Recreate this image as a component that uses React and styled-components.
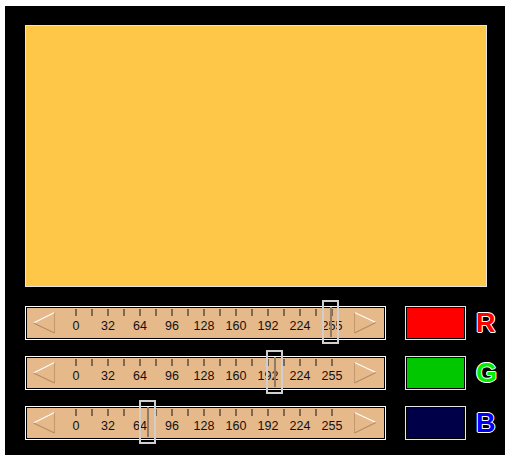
import React from "react";
import styled, { createGlobalStyle } from "styled-components";

const GlobalStyle = createGlobalStyle`
  html, body {
    margin: 0;
    padding: 0;
    background: #ffffff;
    font-family: "Liberation Sans", Arial, sans-serif;
  }
`;

const Panel = styled.div`
  margin: 6px 0 0 5px;
  width: 500px;
  height: 449px;
  box-sizing: border-box;
  background: #000;
  padding: 19px 0 0 20px;
  display: flex;
  flex-direction: column;
`;

const Preview = styled.div`
  width: 462px;
  height: 262px;
  box-sizing: border-box;
  border: 1px solid #e4e4e4;
  background: ${(p) => p.$color};
`;

const Rows = styled.div`
  margin-top: 19px;
  display: flex;
  flex-direction: column;
  gap: 16px;
`;

const Row = styled.div`
  display: flex;
  align-items: center;
  height: 34px;

  & > * {
    flex: none;
  }
`;

const SliderFrame = styled.div`
  position: relative;
  width: 361px;
  height: 34px;
  box-sizing: border-box;
  border: 1px solid #ffffff;
  padding: 1px;
  background: #000;
`;

const Track = styled.div`
  height: 100%;
  background: #e6b98b;
  display: flex;
  align-items: center;
`;

const ArrowIcon = styled.svg`
  flex: none;
  width: 23px;
  height: 22px;
  margin-left: ${(p) => p.$ml}px;
`;

const Scale = styled.div`
  align-self: stretch;
  flex: none;
  width: 288px;
  margin-left: 4px;
  display: flex;
  flex-direction: column;
`;

const Ticks = styled.div`
  height: 7px;
  margin-top: 1px;
  padding-left: 15px;
  display: flex;
  gap: 14px;
`;

const Tick = styled.span`
  flex: none;
  width: 2px;
  height: 100%;
  background: #7b6753;
`;

const Labels = styled.div`
  margin-top: 3px;
  display: flex;
`;

const Label = styled.span`
  flex: none;
  width: 32px;
  text-align: center;
  font-size: 12.5px;
  line-height: 14px;
  color: #111;
`;

const Thumb = styled.div`
  position: absolute;
  top: -7px;
  width: 17px;
  height: 44px;
  box-sizing: border-box;
  border: 2px solid #cfcfcf;

  &::after {
    content: "";
    position: absolute;
    left: 5.5px;
    top: 5px;
    bottom: 5px;
    width: 2px;
    background: #8e7b68;
  }
`;

const Swatch = styled.div`
  margin-left: 19px;
  width: 61px;
  height: 34px;
  box-sizing: border-box;
  border: 1px solid #e6e6e6;
  padding: 1px;
  background: #000;

  &::before {
    content: "";
    display: block;
    width: 100%;
    height: 100%;
    background: ${(p) => p.$color};
  }
`;

const Channel = styled.span`
  margin-left: 10px;
  font-size: 27px;
  font-weight: bold;
  line-height: 27px;
  color: ${(p) => p.$color};
  -webkit-text-stroke: 0.8px #fff;
  paint-order: stroke fill;
  text-shadow: 1px 0 0 #fff, -1px 0 0 #fff, 0 1px 0 #fff, 0 -1px 0 #fff;
`;

const LeftArrow = () => (
  <ArrowIcon viewBox="0 0 23 22" $ml={6}>
    <line x1="0.5" y1="11" x2="21.5" y2="0.5" stroke="#fff" strokeWidth="1.1" />
    <line x1="21.5" y1="0.5" x2="21.5" y2="21" stroke="#c49a70" strokeWidth="1.1" />
    <line x1="0.5" y1="11" x2="21.5" y2="21" stroke="#b58c64" strokeWidth="1.1" />
  </ArrowIcon>
);

const RightArrow = () => (
  <ArrowIcon viewBox="0 0 23 22" $ml={6}>
    <line x1="0.5" y1="0.5" x2="22" y2="10.5" stroke="#fff" strokeWidth="1.1" />
    <line x1="0.5" y1="0.5" x2="0.5" y2="21" stroke="#c49a70" strokeWidth="1.1" />
    <line x1="0.5" y1="21" x2="22" y2="10.5" stroke="#b58c64" strokeWidth="1.1" />
  </ArrowIcon>
);

const tickCount = 17;
const labels = [0, 32, 64, 96, 128, 160, 192, 224, 255];

const Slider = ({ value }) => (
  <SliderFrame>
    <Track>
      <LeftArrow />
      <Scale>
        <Ticks>
          {Array.from({ length: tickCount }, (_, i) => (
            <Tick key={i} />
          ))}
        </Ticks>
        <Labels>
          {labels.map((l) => (
            <Label key={l}>{l}</Label>
          ))}
        </Labels>
      </Scale>
      <RightArrow />
    </Track>
    <Thumb style={{ left: 41 + value }} />
  </SliderFrame>
);

const channels = [
  { name: "R", value: 255, letter: "#ff0000", swatch: (v) => `rgb(${v},0,0)` },
  { name: "G", value: 199, letter: "#00ee00", swatch: (v) => `rgb(0,${v},0)` },
  { name: "B", value: 72, letter: "#0000ff", swatch: (v) => `rgb(0,0,${v})` },
];

export default function App() {
  const [r, g, b] = channels.map((c) => c.value);
  return (
    <>
      <GlobalStyle />
      <Panel>
        <Preview $color={`rgb(${r},${g},${b})`} />
        <Rows>
          {channels.map((c) => (
            <Row key={c.name}>
              <Slider value={c.value} />
              <Swatch $color={c.swatch(c.value)} />
              <Channel $color={c.letter}>{c.name}</Channel>
            </Row>
          ))}
        </Rows>
      </Panel>
    </>
  );
}
